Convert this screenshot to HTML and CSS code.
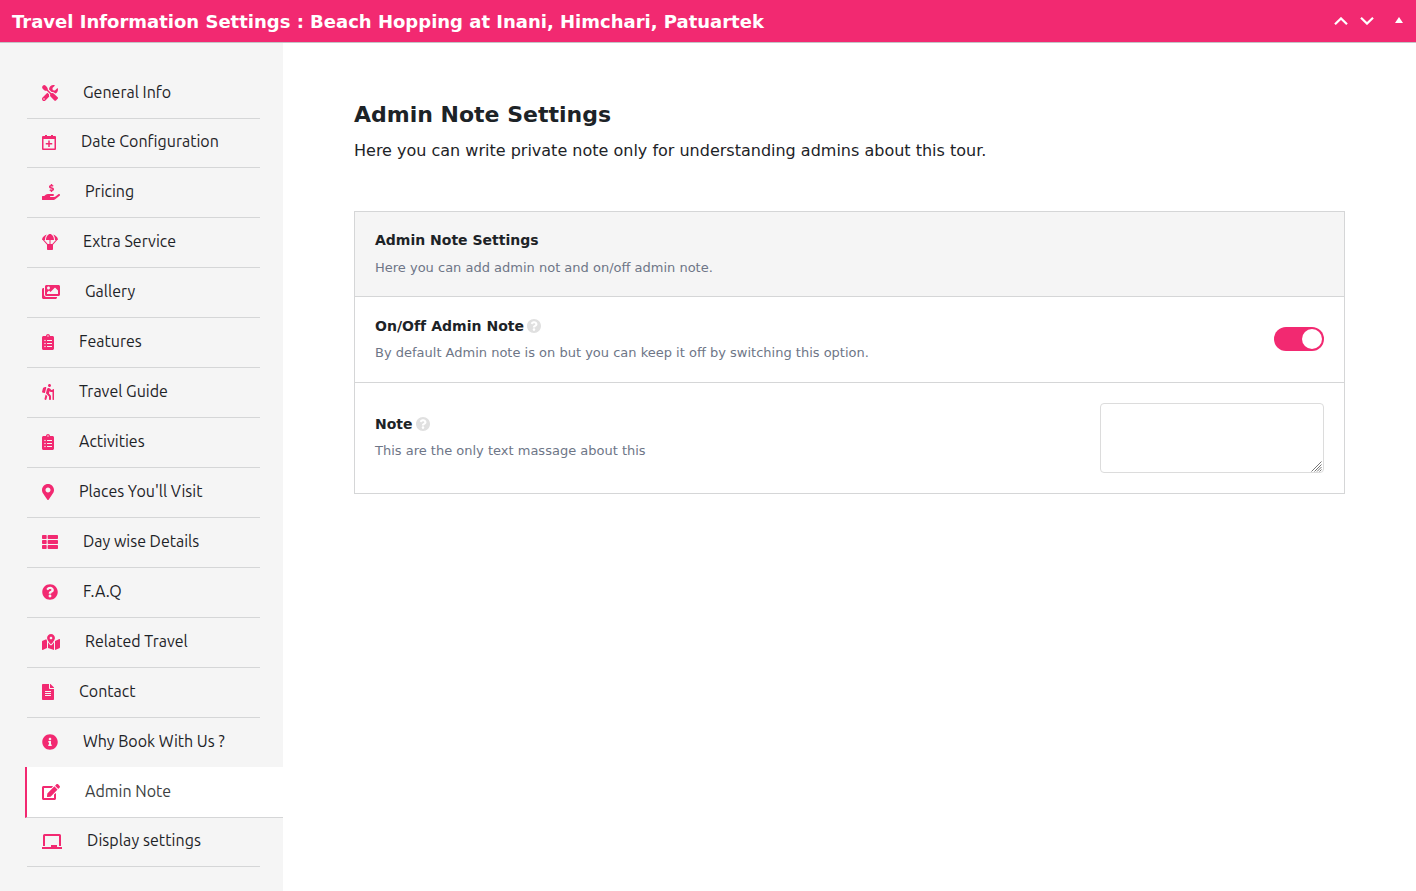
FILE: index.html
```html
<!DOCTYPE html>
<html lang="en">
<head>
<meta charset="utf-8">
<title>Travel Information Settings</title>
<link rel="stylesheet" href="styles.css">
</head>
<body>
<header class="topbar">
  <h2 class="topbar-title">Travel Information Settings : Beach Hopping at Inani, Himchari, Patuartek</h2>
  <div class="topbar-actions">
    <svg class="chev" width="14" height="8" viewBox="0 0 14 8"><path d="M1 7.200L7 1.400l6 5.800"/></svg>
    <svg class="chev" width="14" height="8" viewBox="0 0 14 8"><path d="M1 .8l6 5.800L13 .8"/></svg>
    <svg class="tri" width="8" height="6" viewBox="0 0 8 6"><path d="M4 0l4 6H0z"/></svg>
  </div>
</header>
<div class="layout">
  <ul class="sidebar">
    <li class="item"><svg class="icon" width="16" height="16" viewBox="0 0 512 512"><path d="M501.100 395.700L384 278.600c-23.100-23.100-57.600-27.600-85.400-13.900L186 152q6-50-30-90L110 16Q64-16 26 26T16 110l46 46q40 36 90 30L265.100 293.200c-13.600 27.800-9.200 62.300 13.900 85.400l117.100 117.100c14.600 14.600 38.200 14.600 52.700 0l52.700-52.700c14.500-14.600 14.500-38.200 0-52.700zM331.700 225c28.300 0 54.900 11 74.900 31l19.400 19.400c15.800-6.900 30.800-16.500 43.800-29.500 37.100-37.100 49.700-89.300 37.900-136.700-2.200-9-13.500-12.100-20.100-5.500l-74.400 74.400-67.900-11.300L334 98.900l74.400-74.400c6.600-6.600 3.400-17.900-5.700-20.200-47.400-11.700-99.600.9-136.600 37.900-28.500 28.500-41.900 66.100-41.200 103.600l82.100 82.100c8.100-1.900 16.500-2.900 24.700-2.900zm-103.900 82l-56.700-56.700L18.700 402.800c-25 25-25 65.500 0 90.500s65.500 25 90.500 0l123.600-123.600c-7.600-19.900-9.900-41.600-5-62.700zM64 472c-13.200 0-24-10.800-24-24 0-13.300 10.700-24 24-24s24 10.700 24 24c0 13.200-10.700 24-24 24z"/></svg><span>General Info</span></li>
    <li class="item short"><svg class="icon" width="14" height="16" viewBox="0 0 14 16"><path fill-rule="evenodd" d="M1 2h2V1h2v1h4V1h2v1h2q1 0 1 1v12q0 1-1 1H1q-1 0-1-1V3q0-1 1-1zM1.500 5v9.500h11V5zM6.250 6.500h1.500v2.500h2.500v1.500h-2.500v2.500h-1.500v-2.500h-2.500V9h2.500z"/></svg><span>Date Configuration</span></li>
    <li class="item"><svg class="icon" width="18" height="16" viewBox="0 0 576 512"><path d="M271.060,144.300l54.270,14.300a8.590,8.590,0,0,1,6.630,8.100c0,4.600-4.090,8.400-9.120,8.400h-35.600a30,30,0,0,1-11.190-2.200c-5.240-2.200-11.280-1.700-15.300,2l-19,17.500a11.680,11.680,0,0,0-2.250,2.660,11.420,11.420,0,0,0,3.880,15.740,83.770,83.770,0,0,0,34.510,11.500V240c0,8.800,7.830,16,17.370,16h17.370c9.550,0,17.380-7.200,17.380-16V222.400c32.930-3.600,57.840-31,53.500-63-3.150-23-22.460-41.300-46.560-47.700L282.680,97.400a8.590,8.590,0,0,1-6.630-8.100c0-4.600,4.090-8.400,9.120-8.400h35.600A30,30,0,0,1,332,83.100c5.230,2.200,11.280,1.700,15.300-2l19-17.500A11.310,11.310,0,0,0,368.470,61a11.430,11.430,0,0,0-3.840-15.780,83.820,83.820,0,0,0-34.520-11.500V16c0-8.800-7.820-16-17.370-16H295.370C285.820,0,278,7.200,278,16V33.600c-32.890,3.600-57.850,31-53.510,63C227.630,119.600,247,137.900,271.060,144.300ZM565.270,328.100c-11.800-10.700-30.200-10-42.600,0L430.270,402a63.640,63.640,0,0,1-40,14H272a16,16,0,0,1,0-32h78.290c15.900,0,30.710-10.900,33.250-26.600a31.200,31.200,0,0,0,.46-5.460A32,32,0,0,0,352,320H192a117.660,117.660,0,0,0-74.100,26.290L71.400,384H16A16,16,0,0,0,0,400v96a16,16,0,0,0,16,16H372.770a64,64,0,0,0,40-14L564,377a32,32,0,0,0,1.280-48.900Z"/></svg><span>Pricing</span></li>
    <li class="item"><svg class="icon" width="16" height="16" viewBox="0 0 512 512"><path d="M511.900 175c-9.100-75.600-78.400-132.400-158.300-158.700C390 55.700 416 116.900 416 192h28.100L327.500 321.500c-2.500-.6-4.800-1.500-7.500-1.500h-48V192h112C384 76.800 315.100 0 256 0S128 76.800 128 192h112v128h-48c-2.700 0-5 .9-7.500 1.500L67.900 192H96c0-75.100 26-136.300 62.400-175.700C78.500 42.700 9.200 99.500.1 175c-1.100 9.100 6.800 17 16 17h8.700l136.700 151.900c-.7 2.600-1.600 5.200-1.600 8.100v128c0 17.700 14.300 32 32 32h128c17.700 0 32-14.300 32-32V352c0-2.900-.9-5.400-1.600-8.100L487.100 192h8.700c9.300 0 17.200-7.800 16.100-17z"/></svg><span>Extra Service</span></li>
    <li class="item"><svg class="icon" width="18" height="16" viewBox="0 0 576 512"><path d="M480 416v16c0 26.510-21.490 48-48 48H48c-26.510 0-48-21.490-48-48V176c0-26.510 21.490-48 48-48h16v208c0 44.112 35.888 80 80 80h336zm96-80V80c0-26.510-21.490-48-48-48H144c-26.510 0-48 21.490-48 48v256c0 26.510 21.490 48 48 48h384c26.510 0 48-21.490 48-48zM256 128c0 26.510-21.490 48-48 48s-48-21.490-48-48 21.490-48 48-48 48 21.490 48 48zm-96 144l55.515-55.515c4.686-4.686 12.284-4.686 16.971 0L272 256l135.515-135.515c4.686-4.686 12.284-4.686 16.971 0L512 208v112H160v-48z"/></svg><span>Gallery</span></li>
    <li class="item"><svg class="icon" width="12" height="16" viewBox="0 0 384 512"><path id="clipboard" d="M336 64h-80c0-35.300-28.700-64-64-64s-64 28.700-64 64H48C21.500 64 0 85.500 0 112v352c0 26.500 21.500 48 48 48h288c26.500 0 48-21.500 48-48V112c0-26.500-21.500-48-48-48zM96 424c-13.300 0-24-10.700-24-24s10.700-24 24-24 24 10.700 24 24-10.700 24-24 24zm0-96c-13.300 0-24-10.700-24-24s10.700-24 24-24 24 10.700 24 24-10.700 24-24 24zm0-96c-13.300 0-24-10.700-24-24s10.700-24 24-24 24 10.700 24 24-10.700 24-24 24zm96-192c13.300 0 24 10.700 24 24s-10.700 24-24 24-24-10.700-24-24 10.700-24 24-24zm128 368c0 4.400-3.600 8-8 8H168c-4.400 0-8-3.600-8-8v-16c0-4.400 3.600-8 8-8h144c4.400 0 8 3.600 8 8v16zm0-96c0 4.400-3.600 8-8 8H168c-4.400 0-8-3.600-8-8v-16c0-4.400 3.600-8 8-8h144c4.400 0 8 3.600 8 8v16zm0-96c0 4.400-3.600 8-8 8H168c-4.400 0-8-3.600-8-8v-16c0-4.400 3.600-8 8-8h144c4.400 0 8 3.600 8 8v16z"/></svg><span>Features</span></li>
    <li class="item"><svg class="icon" width="12" height="16" viewBox="0 0 384 512"><path d="M80.950 472.230c-4.280 17.160 6.140 34.530 23.280 38.810 2.610.66 5.220.95 7.800.95 14.330 0 27.370-9.700 31.020-24.230l25.240-100.970-52.780-52.780-34.560 138.220zm14.890-196.120L137 117c2.190-8.420-3.140-16.950-11.920-19.060-43.880-10.520-88.350 15.070-99.320 57.170L.49 253.240c-2.190 8.420 3.140 16.950 11.920 19.060l63.560 15.250c8.790 2.100 17.680-3.020 19.870-11.440zM368 160h-16c-8.840 0-16 7.160-16 16v16h-34.750l-46.780-46.780C243.380 134.110 228.610 128 212.910 128c-27.020 0-50.470 18.300-57.030 44.520l-26.920 107.720a32.012 32.012 0 0 0 8.420 30.390L224 397.250V480c0 17.670 14.330 32 32 32s32-14.330 32-32v-82.750c0-17.090-6.660-33.160-18.750-45.250l-46.820-46.820c.15-.5.49-.89.62-1.410l19.890-79.570 22.430 22.430c6 6 14.140 9.380 22.620 9.380h48v240c0 8.840 7.160 16 16 16h16c8.840 0 16-7.160 16-16V176c.01-8.840-7.150-16-15.990-16zM240 96c26.510 0 48-21.490 48-48S266.510 0 240 0s-48 21.490-48 48 21.490 48 48 48z"/></svg><span>Travel Guide</span></li>
    <li class="item"><svg class="icon" width="12" height="16" viewBox="0 0 384 512"><use href="#clipboard"/></svg><span>Activities</span></li>
    <li class="item"><svg class="icon" width="12" height="16" viewBox="0 0 384 512"><path d="M172.268 501.670C26.970 291.031 0 269.413 0 192 0 85.961 85.961 0 192 0s192 85.961 192 192c0 77.413-26.970 99.031-172.268 309.670-9.535 13.774-29.930 13.773-39.464 0zM192 272c44.183 0 80-35.817 80-80s-35.817-80-80-80-80 35.817-80 80 35.817 80 80 80z"/></svg><span>Places You'll Visit</span></li>
    <li class="item"><svg class="icon" width="16" height="16" viewBox="0 0 512 512"><rect x="0" y="32" width="149" height="128" rx="24"/><rect x="181" y="32" width="331" height="128" rx="24"/><rect x="0" y="192" width="149" height="128" rx="24"/><rect x="181" y="192" width="331" height="128" rx="24"/><rect x="0" y="352" width="149" height="128" rx="24"/><rect x="181" y="352" width="331" height="128" rx="24"/></svg><span>Day wise Details</span></li>
    <li class="item"><svg class="icon" width="16" height="16" viewBox="0 0 512 512"><path id="question" d="M504 256c0 136.997-111.043 248-248 248S8 392.997 8 256C8 119.083 119.043 8 256 8s248 111.083 248 248zM262.655 90c-54.497 0-89.255 22.957-116.549 63.758-3.536 5.286-2.353 12.415 2.715 16.258l34.699 26.310c5.205 3.947 12.621 3.008 16.665-2.122 17.864-22.658 30.113-35.797 57.303-35.797 20.429 0 45.698 13.148 45.698 32.958 0 14.976-12.363 22.667-32.534 33.976C247.128 238.528 216 254.941 216 296v4c0 6.627 5.373 12 12 12h56c6.627 0 12-5.373 12-12v-1.333c0-28.462 83.186-29.647 83.186-106.667 0-58.002-60.165-102-116.531-102zM256 338c-25.365 0-46 20.635-46 46 0 25.364 20.635 46 46 46s46-20.636 46-46c0-25.365-20.635-46-46-46z"/></svg><span>F.A.Q</span></li>
    <li class="item"><svg class="icon" width="18" height="16" viewBox="0 0 576 512"><path d="M288 0c-69.590 0-126 56.410-126 126 0 56.260 82.350 158.800 113.900 196.020 6.390 7.540 17.820 7.540 24.200 0C331.650 284.800 414 182.260 414 126 414 56.410 357.590 0 288 0zm0 168c-23.200 0-42-18.800-42-42s18.800-42 42-42 42 18.800 42 42-18.800 42-42 42zM20.120 215.950A32.006 32.006 0 0 0 0 245.660v250.320c0 11.320 11.430 19.060 21.940 14.860L160 448V214.920c-8.840-15.980-16.070-31.540-21.250-46.420L20.120 215.950zM288 359.670c-14.070 0-27.380-6.180-36.510-16.960-19.660-23.200-40.570-49.620-59.490-76.720v182l192 64V266c-18.920 27.090-39.820 53.520-59.490 76.720-9.130 10.770-22.440 16.950-36.510 16.950zm266.060-198.510L416 224v288l139.880-55.950A31.996 31.996 0 0 0 576 426.340V176.020c0-11.320-11.430-19.060-21.940-14.860z"/></svg><span>Related Travel</span></li>
    <li class="item"><svg class="icon" width="12" height="16" viewBox="0 0 384 512"><path d="M224 136V0H24C10.700 0 0 10.700 0 24v464c0 13.300 10.700 24 24 24h336c13.300 0 24-10.700 24-24V160H248c-13.200 0-24-10.800-24-24zm64 236c0 6.600-5.400 12-12 12H108c-6.600 0-12-5.400-12-12v-8c0-6.600 5.400-12 12-12h168c6.600 0 12 5.400 12 12v8zm0-64c0 6.600-5.400 12-12 12H108c-6.600 0-12-5.400-12-12v-8c0-6.600 5.400-12 12-12h168c6.600 0 12 5.400 12 12v8zm0-72v8c0 6.600-5.400 12-12 12H108c-6.600 0-12-5.400-12-12v-8c0-6.600 5.400-12 12-12h168c6.600 0 12 5.400 12 12zm96-114.100v6.100H256V0h6.100c6.400 0 12.500 2.500 17 7l97.900 98c4.500 4.500 7 10.600 7 16.900z"/></svg><span>Contact</span></li>
    <li class="item"><svg class="icon" width="16" height="16" viewBox="0 0 512 512"><path d="M256 8C119.043 8 8 119.083 8 256c0 136.997 111.043 248 248 248s248-111.003 248-248C504 119.083 392.957 8 256 8zm0 110c23.196 0 42 18.804 42 42s-18.804 42-42 42-42-18.804-42-42 18.804-42 42-42zm56 254c0 6.627-5.373 12-12 12h-88c-6.627 0-12-5.373-12-12v-24c0-6.627 5.373-12 12-12h12v-64h-12c-6.627 0-12-5.373-12-12v-24c0-6.627 5.373-12 12-12h64c6.627 0 12 5.373 12 12v100h12c6.627 0 12 5.373 12 12v24z"/></svg><span>Why Book With Us ?</span></li>
    <li class="item active"><svg class="icon" width="18" height="16" viewBox="0 0 576 512"><path d="M402.600 83.200l90.200 90.200c3.800 3.800 3.800 10 0 13.800L274.400 405.600l-92.800 10.300c-12.400 1.400-22.900-9.100-21.500-21.500l10.300-92.800L388.800 83.200c3.800-3.800 10-3.800 13.800 0zm162-22.900l-48.800-48.800c-15.200-15.200-39.900-15.200-55.200 0l-35.400 35.400c-3.800 3.800-3.800 10 0 13.800l90.200 90.200c3.800 3.800 10 3.800 13.800 0l35.400-35.400c15.200-15.300 15.200-40 0-55.200zM384 346.200V448H64V128h229.800c3.200 0 6.200-1.300 8.500-3.500l40-40c7.600-7.600 2.200-20.500-8.500-20.500H48C21.500 64 0 85.500 0 112v352c0 26.500 21.500 48 48 48h352c26.500 0 48-21.500 48-48V306.200c0-10.700-12.900-16-20.500-8.500l-40 40c-2.200 2.300-3.500 5.300-3.500 8.500z"/></svg><span>Admin Note</span></li>
    <li class="item short last"><svg class="icon" width="20" height="16" viewBox="0 0 20 16"><path d="M1 13V2.500q0-1.500 1.500-1.500h15q1.500 0 1.500 1.500V13h-2V3H3v10zM0 14h9v-2h6v2h5v2H0z"/></svg><span>Display settings</span></li>
  </ul>
  <main class="content">
    <h1 class="heading">Admin Note Settings</h1>
    <p class="lead">Here you can write private note only for understanding admins about this tour.</p>
    <section class="panel">
      <div class="row row-head">
        <div><h3 class="label">Admin Note Settings</h3><p class="desc">Here you can add admin not and on/off admin note.</p></div>
      </div>
      <div class="row row-switch">
        <div><h3 class="label">On/Off Admin Note<svg class="help" width="14" height="14" viewBox="8 8 496 496"><use href="#question"/></svg></h3><p class="desc">By default Admin note is on but you can keep it off by switching this option.</p></div>
        <div class="switch"><span class="knob"></span></div>
      </div>
      <div class="row row-note">
        <div><h3 class="label">Note<svg class="help" width="14" height="14" viewBox="8 8 496 496"><use href="#question"/></svg></h3><p class="desc">This are the only text massage about this</p></div>
        <div class="note-box">
          <textarea class="note"></textarea>
          <svg class="grip" width="11" height="11" viewBox="0 0 11 11"><path d="M.5 10.500l10-10M3.500 10.500l7-7M6 10.500L10.500 6M8.500 10.500l2-2"/></svg>
        </div>
      </div>
    </section>
  </main>
</div>
</body>
</html>
```
FILE: styles.css
```css
* { box-sizing: border-box; }
body {
  margin: 0;
  height: 891px;
  overflow: hidden;
  display: flex;
  flex-direction: column;
  background: #fff;
  color: #1d2327;
  font-family: "DejaVu Sans", sans-serif;
}
h1, h2, h3, p, ul { margin: 0; padding: 0; }
svg { display: block; flex: none; }

.topbar {
  height: 43px;
  flex: none;
  display: flex;
  align-items: center;
  justify-content: space-between;
  padding: 0 13px 0 12px;
  background: #f22971;
  border-bottom: 1px solid #c3c4c7;
  color: #fff;
}
.topbar-title { font-size: 18px; font-weight: 700; line-height: 40px; padding-top: 2px; }
.topbar-actions { display: flex; align-items: center; gap: 12px; }
.chev { fill: none; stroke: #fff; stroke-width: 2.2; }
.tri { fill: #fff; margin: 0 0.5px 2px 8.5px; }

.layout { flex: 1; display: flex; min-height: 0; }
.sidebar {
  width: 283px;
  flex: none;
  list-style: none;
  padding: 26px 23px 0 27px;
  background: #f5f5f5;
  font-family: Ubuntu, "Noto Sans", sans-serif;
  font-size: 16px;
}
.item {
  height: 50px;
  display: flex;
  align-items: center;
  gap: 25px;
  padding: 0 0 2px 15px;
  border-bottom: 1px solid #d5d6d7;
  white-space: nowrap;
}
.item span { line-height: 22px; margin-top: -1px; }
.short { height: 49px; padding-bottom: 3px; }
.last { letter-spacing: 0.08px; }
.icon { fill: #f22971; margin-top: 1px; }
.active {
  margin: -1px -23px 0 -2px;
  height: 51px;
  border-left: 2px solid #f22971;
  background: #fff;
  color: #3c3f42;
}

.content { flex: 1; padding: 57px 71px 0; }
.heading { font-size: 22px; line-height: 30px; }
.lead { font-size: 16px; line-height: 24px; margin-top: 9px; }
.panel { margin-top: 48px; border: 1px solid #d5d6d7; }
.row {
  display: flex;
  align-items: center;
  justify-content: space-between;
  padding: 0 20px;
  border-bottom: 1px solid #d5d6d7;
}
.row:last-child { border-bottom: 0; }
.row-head { height: 85px; background: #f5f5f5; }
.row-head .desc { margin-top: 8px; }
.row-switch { height: 86px; }
.row-switch .label { letter-spacing: 0.03px; }
.row-note { height: 110px; }
.row-note .desc { margin-bottom: 2px; }
.label { display: flex; align-items: center; gap: 3px; font-size: 14px; line-height: 20px; }
.desc { font-size: 13px; line-height: 20px; margin-top: 7px; color: #6e7687; }
.help { fill: #e0e0e0; }
.switch {
  width: 50px;
  height: 24px;
  margin-bottom: 2px;
  padding: 2px;
  display: flex;
  justify-content: flex-end;
  border-radius: 12px;
  background: #f22971;
}
.knob { width: 20px; height: 20px; border-radius: 50%; background: #fff; }
.note-box { position: relative; }
.note {
  display: block;
  width: 224px;
  height: 70px;
  border: 1px solid #dcdcdc;
  border-radius: 4px;
  background: #fff;
  resize: none;
}
.grip { position: absolute; right: 2px; bottom: 1px; fill: none; stroke: #777; stroke-width: 1; }
```
